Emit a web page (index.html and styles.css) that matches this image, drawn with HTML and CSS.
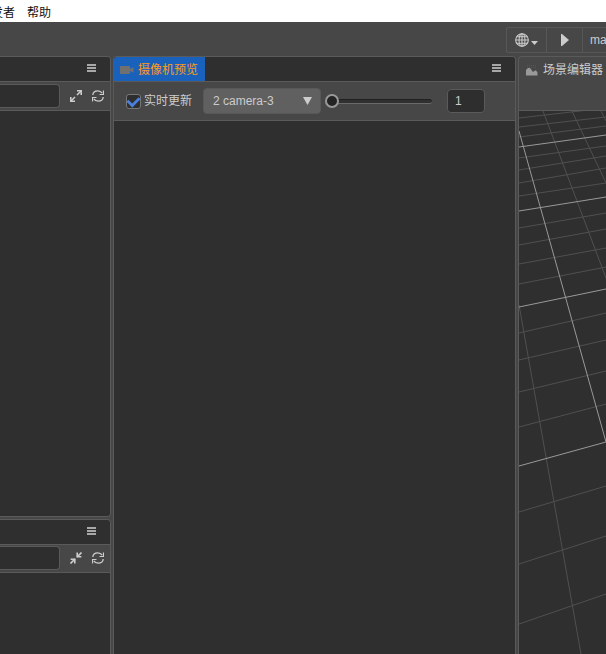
FILE: index.html
```html
<!DOCTYPE html>
<html lang="zh-CN">
<head>
<meta charset="utf-8">
<title>摄像机预览</title>
<link rel="stylesheet" href="styles.css">
</head>
<body>
<svg class="defs" aria-hidden="true">
  <symbol id="menu" viewBox="0 0 9 8"><path d="M0 1h9M0 4h9M0 7h9" stroke="currentColor" stroke-width="2"/></symbol>
  <symbol id="refresh" viewBox="0 0 12 12"><path d="M.8 5C1 2.400 3.200.8 5.700.8c2 0 3.500.8 4.500 2.400M11.200 7c-.2 2.600-2.400 4.200-4.900 4.200-2 0-3.500-.8-4.500-2.400" fill="none" stroke="currentColor" stroke-width="1.300"/><path d="M11.500.5v4h-4M.5 11.500v-4h4" fill="none" stroke="currentColor" stroke-width="1.200"/></symbol>
  <symbol id="expand" viewBox="0 0 12 12"><path d="M7 5l4-4M5 7l-4 4" stroke="currentColor" stroke-width="1.600"/><path d="M7 .8h4.200V5M.8 7v4.200H5" fill="none" stroke="currentColor" stroke-width="1.600"/></symbol>
  <symbol id="collapse" viewBox="0 0 12 12"><path d="M7 5l4.500-4.500M5 7L.5 11.500" stroke="currentColor" stroke-width="1.600"/><path d="M7.200 .6V4.800h4.200M.6 7.200H4.800v4.200" fill="none" stroke="currentColor" stroke-width="1.600"/></symbol>
</svg>
<nav class="menubar"><a href="#">开发者</a><a href="#">帮助</a></nav>
<header class="toolbar">
  <div class="group">
    <button class="globe" aria-label="预览平台">
      <svg width="14" height="14" viewBox="0 0 14 14" fill="none" stroke="currentColor" stroke-width="1.100"><circle cx="7" cy="7" r="6.300"/><ellipse cx="7" cy="7" rx="3" ry="6.300"/><path d="M7 .7v12.600M.7 7h12.600M1.600 3.700h10.800M1.600 10.300h10.800"/></svg>
      <svg class="caret" width="7" height="4" viewBox="0 0 7 4"><path d="M0 0h7L3.500 4z" fill="currentColor"/></svg>
    </button>
    <button class="play" aria-label="播放"><svg width="8" height="12" viewBox="0 0 8 12"><path d="M0 0h1l7 6-7 6H0z" fill="currentColor"/></svg></button>
    <button class="scene">ma</button>
  </div>
</header>
<main class="dock">
  <div class="column">
    <section class="panel">
      <div class="tabs"><button class="menu" aria-label="菜单"><svg width="9" height="8"><use href="#menu"/></svg></button></div>
      <div class="bar search">
        <input type="text" aria-label="搜索层级">
        <button class="icon" aria-label="展开"><svg width="12" height="12"><use href="#expand"/></svg></button>
        <button class="icon" aria-label="刷新"><svg width="12" height="12"><use href="#refresh"/></svg></button>
      </div>
      <div class="view"></div>
    </section>
    <section class="panel lower">
      <div class="tabs"><button class="menu" aria-label="菜单"><svg width="9" height="8"><use href="#menu"/></svg></button></div>
      <div class="bar search">
        <input type="text" aria-label="搜索资源">
        <button class="icon" aria-label="折叠"><svg width="12" height="12"><use href="#collapse"/></svg></button>
        <button class="icon" aria-label="刷新"><svg width="12" height="12"><use href="#refresh"/></svg></button>
      </div>
      <div class="view"></div>
    </section>
  </div>
  <section class="panel preview">
    <div class="tabs">
      <button class="tab"><svg width="14" height="8" viewBox="0 0 14 8"><path d="M1 0h8q1 0 1 1v2l3-1.500h.5v5H13l-3-1.500v2q0 1-1 1H1Q0 8 0 7V1q0-1 1-1z" fill="currentColor"/></svg>摄像机预览</button>
      <button class="menu" aria-label="菜单"><svg width="9" height="8"><use href="#menu"/></svg></button>
    </div>
    <div class="bar controls">
      <input type="checkbox" id="live" checked><label for="live">实时更新</label>
      <span class="picker"><select aria-label="摄像机"><option>2 camera-3</option></select><svg width="10" height="8" viewBox="0 0 10 8"><path d="M0 0h9L4.500 8z" fill="currentColor"/></svg></span>
      <input type="range" min="0" max="100" value="0" aria-label="缩放">
      <input class="number" type="text" value="1" aria-label="缩放值">
    </div>
    <div class="view"></div>
  </section>
  <section class="panel editor">
    <div class="title"><svg width="12" height="12" viewBox="0 0 12 12"><path d="M1 1.500h10M1 3.500h10" stroke="currentColor" opacity=".2" stroke-dasharray="1 1"/><path d="M0 11.500V6l2-2h2l3 4 2-1.500h1l1.500 2v3z" fill="currentColor"/></svg>场景编辑器</div>
    <div class="view">
      <svg class="grid" viewBox="0 0 87 543" preserveAspectRatio="xMinYMin slice" aria-hidden="true">
        <path class="minor" d="M0 7L87-3M0 16L87 6M0 26L87 15M0 47L87 35M0 59L87 45M0 72L87 57M0 85L87 72M0 117L87 102M0 134L87 118M0 153L87 137M0 173L87 156M0 222L87 202M0 249L87 229M0 281L87 260M0 316L87 293M0 401L87 375M0 453L87 425M0 513L87 483M24 0L87 167M53 0L87 72M82 0L87 10M0 194L62 543"/>
        <path class="major" d="M0 36L87 24M0 100L87 86M0 196L87 178M0 355L87 331M0 20L87 331"/>
      </svg>
    </div>
  </section>
</main>
</body>
</html>
```
FILE: styles.css
```css
* { box-sizing: border-box; }
body {
  margin: 0;
  height: 100vh;
  display: flex;
  flex-direction: column;
  overflow: hidden;
  background: #474747;
  color: #ccc;
  font: 12px/18px "Liberation Sans", "Noto Sans CJK SC", sans-serif;
}
button, input, select { font: inherit; color: inherit; margin: 0; }
button { border: 0; padding: 0; background: none; }
svg { display: block; flex: none; }
.defs { position: absolute; width: 0; height: 0; }

.menubar {
  display: flex;
  gap: 12px;
  height: 22px;
  flex: none;
  align-items: center;
  margin-left: -21px;
  padding-top: 4px;
  background: #fff;
}
.menubar a { color: #111; text-decoration: none; white-space: nowrap; }

.toolbar {
  height: 34px;
  flex: none;
  display: flex;
  justify-content: flex-end;
  align-items: flex-start;
  padding-top: 5px;
}
.group { display: flex; height: 26px; border: 1px solid #575757; border-right: 0; border-radius: 3px 0 0 3px; }
.group button { display: flex; align-items: center; justify-content: center; border-right: 1px solid #575757; }
.globe { width: 40px; gap: 2px; }
.caret { margin-top: 6px; }
.play { width: 36px; }
.group .scene { width: 23px; border-right: 0; padding-left: 7px; justify-content: flex-start; }

.dock {
  flex: 1;
  min-height: 0;
  display: grid;
  grid-template-columns: 111px 1fr 88px;
  gap: 2px;
}
.column { display: flex; flex-direction: column; gap: 2px; min-height: 0; }
.panel {
  display: flex;
  flex-direction: column;
  flex: 461;
  min-width: 0;
  min-height: 0;
  border: 1px solid #5a5a5a;
  border-radius: 4px;
  overflow: hidden;
  background: #474747;
}
.column .panel { border-left: 0; border-radius: 0 4px 4px 0; }
.column .lower { flex: 135; border-bottom: 0; border-bottom-right-radius: 0; }
.preview, .editor { border-bottom: 0; border-radius: 4px 4px 0 0; }
.editor { border-right: 0; border-top-right-radius: 0; }

.tabs { display: flex; height: 25px; flex: none; background: #2f2f2f; border-bottom: 1px solid #5a5a5a; }
.menu { margin-left: auto; padding: 0 14px 2px; color: #a8a8a8; }
.tab { display: flex; align-items: center; gap: 4px; padding: 1px 7px 0 6px; background: #1a61bb; color: #ff9a1a; }
.tab svg { color: #707070; }

.bar { display: flex; align-items: center; flex: none; border-bottom: 1px solid #5a5a5a; }
.search { height: 29px; padding-right: 6px; gap: 10px; }
.lower .search { height: 28px; }
.search input { flex: 1; min-width: 0; height: 24px; border: 1px solid #5a5a5a; border-left: 0; border-radius: 0 4px 4px 0; background: #2e2e2e; }
.icon { color: #ccc; }
.view { flex: 1; min-height: 0; background: #2f2f2f; }

.controls { height: 39px; padding-left: 12px; }
.controls input[type="checkbox"] {
  appearance: none;
  width: 15px;
  height: 15px;
  border: 1px solid #777;
  border-radius: 3px;
  background: #2e2e2e;
  display: grid;
  place-items: center;
}
.controls input[type="checkbox"]:checked::before {
  content: "";
  width: 10px;
  height: 6px;
  border: solid #4a80dc;
  border-width: 0 0 3px 3px;
  transform: translateY(-1px) rotate(-45deg) scale(.9);
}
.controls label { padding-left: 3px; padding-right: 11px; }
.picker { display: grid; align-items: center; width: 118px; height: 26px; border: 1px solid #585858; border-radius: 4px; background: #606060; }
.picker select, .picker svg { grid-area: 1 / 1; }
.picker select { appearance: none; width: 100%; height: 24px; border: 0; padding: 0 9px; background: none; }
.picker svg { justify-self: end; margin-right: 7px; pointer-events: none; }
.controls input[type="range"] { appearance: none; width: 107px; height: 15px; margin-left: 4px; background: none; }
input[type="range"]::-webkit-slider-runnable-track { height: 5px; border: 1px solid #6a6a6a; border-width: 0 0 1px; border-top: 1px solid #202020; border-radius: 3px; background: #303030; }
input[type="range"]::-webkit-slider-thumb { appearance: none; width: 14px; height: 14px; margin-top: -6px; border: 2px solid #999; border-radius: 50%; background: #242424; }
.number { width: 38px; height: 24px; margin-left: 15px; padding: 0 7px; border: 1px solid #5a5a5a; border-radius: 4px; background: #2e2e2e; }

.title { display: flex; height: 54px; flex: none; gap: 5px; align-items: flex-start; padding: 4px 0 0 7px; border-bottom: 1px solid #5a5a5a; white-space: nowrap; }
.title svg { margin-top: 3px; color: #999; }
.grid { width: 100%; height: 100%; }
.grid path { fill: none; stroke-width: 1; }
.minor { stroke: #505050; }
.major { stroke: #999; }
```
